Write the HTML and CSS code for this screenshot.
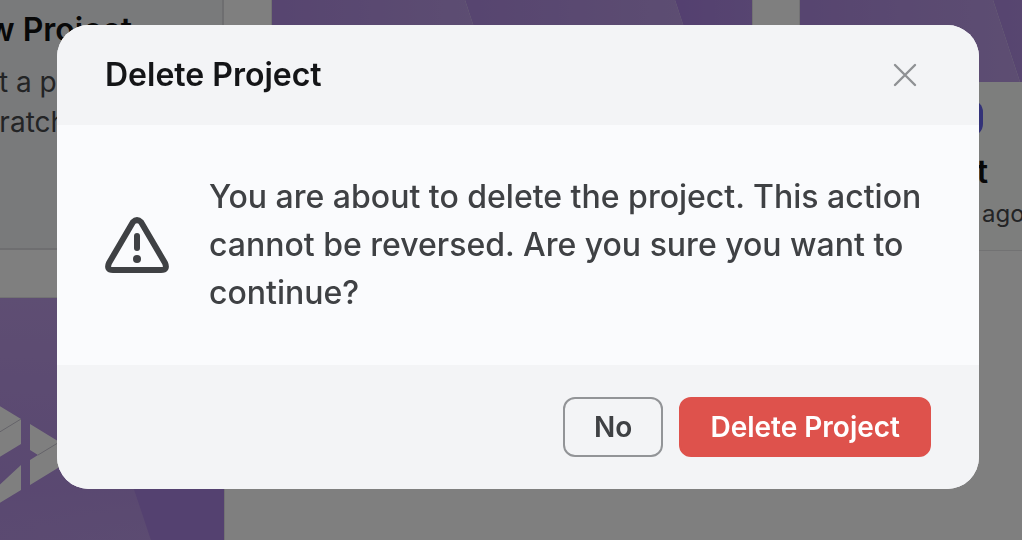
FILE: index.html
```html
<!DOCTYPE html>
<html lang="en">
<head>
<meta charset="utf-8">
<title>Delete Project</title>
<link rel="stylesheet" href="styles.css">
</head>
<body>
<svg class="defs" width="0" height="0" aria-hidden="true">
  <defs>
    <linearGradient id="facet" x1="0" x2="1" y1="0" y2="0">
      <stop offset="0" stop-color="#ae8ae0"/>
      <stop offset="1" stop-color="#bb9ce5"/>
    </linearGradient>
    <linearGradient id="facet-end" x1="0" x2="1" y1="0" y2="0">
      <stop offset="0" stop-color="#a880e0"/>
      <stop offset="1" stop-color="#ae8ae2"/>
    </linearGradient>
    <linearGradient id="facet-top" x1="0" x2="0" y1="0" y2="1">
      <stop offset="0" stop-color="#bd9ce6"/>
      <stop offset="0.6" stop-color="#b490e2" stop-opacity="0.8"/>
      <stop offset="1" stop-color="#bb9ce5" stop-opacity="0"/>
    </linearGradient>
  </defs>
</svg>
<main class="projects">
  <article class="card card-new">
    <h2 class="card-title">New Project</h2>
    <p class="card-text">Start a project in<br>a scratch</p>
  </article>
  <article class="card">
    <svg class="cover cover-tail" viewBox="0 0 480 82" preserveAspectRatio="none" aria-hidden="true">
      <path d="M0 0H193L220 82H0Z" fill="url(#facet)"/>
      <path d="M193 0H403L430 82H220Z" fill="url(#facet)"/>
      <path d="M403 0H480V82H430Z" fill="url(#facet-end)"/>
    </svg>
  </article>
  <article class="card">
    <svg class="cover cover-tail" viewBox="0 0 480 82" preserveAspectRatio="none" aria-hidden="true">
      <path d="M0 0H193L220 82H0Z" fill="url(#facet)"/>
      <path d="M193 0H403L430 82H220Z" fill="url(#facet)"/>
      <path d="M403 0H480V82H430Z" fill="url(#facet-end)"/>
    </svg>
    <div class="card-body">
      <span class="badge"></span>
      <h2 class="card-title">My Project</h2>
      <p class="card-meta">Edited 2 days ago</p>
    </div>
  </article>
  <article class="card">
    <svg class="cover" viewBox="0 0 480 320" aria-hidden="true">
      <rect width="480" height="320" fill="url(#facet)"/>
      <rect width="480" height="320" fill="url(#facet-top)"/>
      <path d="M326 0L433 320H480V0Z" fill="#a982e0"/>
      <g fill="#fff">
        <path d="M236 96L277 121V146L236 171Z"/>
        <path d="M286 126L322 148V165L286 187V162L294 157L286 152Z"/>
        <path d="M236 217V205L277 167V192L236 217Z"/>
      </g>
      <path d="M236 146L277 121M294 157L322 140" stroke="#c9c6d2" stroke-width="1" fill="none"/>
    </svg>
  </article>
</main>

<div class="overlay">
  <section class="modal" role="dialog" aria-modal="true" aria-labelledby="modal-title" aria-describedby="modal-text">
    <header class="modal-header">
      <h1 class="modal-title" id="modal-title">Delete Project</h1>
      <button class="close" type="button" aria-label="Close">
        <svg width="24" height="24" viewBox="0 0 24 24" fill="none" stroke="currentColor" stroke-width="2.4" stroke-linecap="round" aria-hidden="true">
          <path d="M2 2L22 22M22 2L2 22"/>
        </svg>
      </button>
    </header>
    <div class="modal-body">
      <svg class="warning" width="64" height="56" viewBox="0 0 64 56" fill="none" aria-hidden="true">
        <path d="M28 5Q32 1 36 5L60 46Q63 53 56 53H8Q1 53 4 46Z" stroke="currentColor" stroke-width="6" stroke-linejoin="round"/>
        <path d="M32 19V31" stroke="currentColor" stroke-width="6" stroke-linecap="round"/>
        <circle cx="32" cy="42" r="4" fill="currentColor"/>
      </svg>
      <p class="modal-text" id="modal-text">You are about to delete the project. This action cannot be reversed. Are you sure you want to continue?</p>
    </div>
    <footer class="modal-footer">
      <button class="button button-outline" type="button">No</button>
      <button class="button button-danger" type="button">Delete Project</button>
    </footer>
  </section>
</div>
</body>
</html>
```
FILE: styles.css
```css
* {
  box-sizing: border-box;
}

body {
  margin: 0;
  background: #fff;
  font-family: Inter, "Liberation Sans", sans-serif;
}

h1, h2, p {
  margin: 0;
}

.defs {
  position: absolute;
}

.projects {
  display: grid;
  grid-template-columns: repeat(3, 480px);
  align-content: start;
  justify-content: center;
  gap: 48px;
  height: 100vh;
  padding-left: 2px;
  overflow: hidden;
}

.card {
  background: #fafcfb;
  box-shadow: 0 0 0 1px #e4e4e6;
}

.card-new {
  border-right: 2px solid #dcdde0;
  border-bottom: 2px solid #dcdde0;
  padding: 10px 0 0 201px;
  background: #f2f4f7;
  box-shadow: none;
}

.card-title {
  font-size: 32px;
  line-height: 40px;
  font-weight: 600;
  color: #101010;
}

.card-text {
  margin-top: 12px;
  font-size: 28px;
  line-height: 40px;
  color: #47484b;
}

.cover {
  display: block;
  width: 100%;
}

.cover-tail {
  height: 82px;
}

.card-body {
  padding: 18px 22px 20px;
}

.badge {
  display: block;
  width: 161px;
  height: 36px;
  border-radius: 12px;
  background: #6665f0;
}

.card-body .card-title {
  margin-top: 16px;
}

.card-meta {
  margin-top: 6px;
  font-size: 24px;
  line-height: 32px;
  color: #47484b;
}

.overlay {
  position: fixed;
  inset: 0;
  padding: 25px 43px 0 57px;
  background: rgba(0, 0, 0, 0.5);
}

.modal {
  border-radius: 32px;
  overflow: hidden;
  background: #fafbfd;
  color: #3f4144;
}

.modal-header {
  display: flex;
  align-items: center;
  justify-content: space-between;
  padding: 30px 62px 30px 48px;
  background: #f3f4f6;
}

.modal-title {
  font-size: 32px;
  line-height: 40px;
  font-weight: 600;
  color: #141517;
}

.close {
  display: flex;
  padding: 0;
  border: 0;
  background: none;
  color: #8f9194;
}

.modal-body {
  display: flex;
  align-items: center;
  gap: 40px;
  padding: 48px;
}

.warning {
  flex: none;
}

.modal-text {
  font-size: 32px;
  line-height: 48px;
  font-weight: 500;
}

.modal-footer {
  display: flex;
  justify-content: flex-end;
  gap: 16px;
  padding: 32px 48px;
  background: #f3f4f6;
}

.button {
  padding: 10px 29px;
  border: 2px solid transparent;
  border-radius: 12px;
  font: 600 28px/36px Inter, "Liberation Sans", sans-serif;
}

.button-outline {
  border-color: #929497;
  background: transparent;
  color: #3f4144;
}

.button-danger {
  border-color: #de524c;
  background: #de524c;
  color: #fff;
}
```
